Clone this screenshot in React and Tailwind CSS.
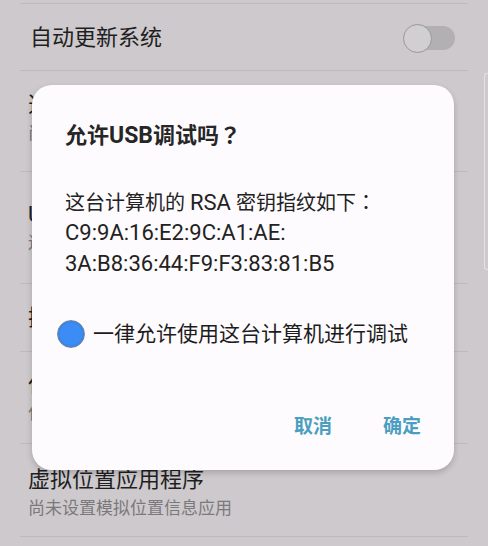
import React from 'react';

const font = { fontFamily: 'Roboto, "Noto Sans CJK SC", sans-serif' };

// centered full-width punctuation, as on the device
const P = ({ children }) => <span style={{ fontFamily: '"Noto Sans CJK TC", sans-serif' }}>{children}</span>;

// Settings row behind the dim layer
const Row = ({ title, sub, height, children }) => (
    <div className={`flex items-center border-t border-[#bdbabd] pl-[8px] pr-[13px] ${height}`}>
        <div className="flex-1 min-w-0">
            <div className="text-[22px] leading-[30px] text-[#1f1f1f]">{title}</div>
            {sub && <div className="text-[17px] leading-[26px] text-[#7b797b]">{sub}</div>}
        </div>
        {children}
    </div>
);

const Toggle = () => (
    <div className="relative w-[52px] h-[30px] flex items-center">
        <div className="absolute right-0 w-[44px] h-[24px] rounded-full bg-[#b3b0b3]" />
        <div className="absolute left-0 w-[29px] h-[29px] rounded-full bg-[#d2cfd2] border border-[#9a979a]" />
    </div>
);

const Dialog = () => (
    <div className="absolute left-[32px] top-[85px] w-[422px] h-[385px] rounded-[20px] bg-[#fdfbfd] shadow-[0_3px_6px_rgba(0,0,0,0.18)] px-[33px] pt-[33px] flex flex-col">
        <div className="h-[30px] text-[22px] leading-[30px] font-bold text-[#262626] whitespace-nowrap">允许<span className="text-[23px]">USB</span>调试吗<P>？</P></div>
        <div className="mt-[38px] text-[20px] leading-[31px] text-[#222]">
            <div className="h-[31px] whitespace-nowrap">这台计算机的 <span className="text-[22px]">RSA</span> 密钥指纹如下<P>：</P></div>
            <div className="h-[31px] text-[22px]">C9:9A:16:E2:9C:A1:AE:</div>
            <div className="h-[31px] text-[22px]">3A:B8:36:44:F9:F3:83:81:B5</div>
        </div>
        <div className="mt-[40px] -ml-[8px] flex items-center gap-[8px] h-[30px]">
            <div className="w-[28px] h-[28px] rounded-full border border-[#7c8796] bg-[radial-gradient(circle,#3b8cf5_55%,#2f7de8_80%,#6a9bd6_100%)]" />
            <div className="text-[21px] leading-[30px] text-[#1c1c1c]">一律允许使用这台计算机进行调试</div>
        </div>
        <div className="mt-[63px] h-[30px] flex justify-end gap-[51px] text-[19px] leading-[30px] font-bold text-[#4c9ec0]">
            <span>取消</span>
            <span>确定</span>
        </div>
    </div>
);

export default function App() {
    return (
        <div className="relative w-[488px] h-[546px] overflow-hidden bg-[#cdc9cc]" style={font}>
            <div className="pt-[3px] px-[20px]">
                <Row title="自动更新系统" height="h-[67px] pt-[2px] pl-[10px]"><Toggle /></Row>
                <Row title="选择调试应用" sub="尚未设置要调试的应用" height="h-[101px] items-start pt-[19px]" />
                <Row title="USB 调试" sub="连接 USB 后启用调试模式" height="h-[112px]" />
                <Row title="撤消 USB 调试授权" height="h-[68px]" />
                <Row title="仅充电模式下允许ADB调试" sub="仅充电模式下启用" height="h-[92px]" />
                <Row title="虚拟位置应用程序" sub="尚未设置模拟位置信息应用" height="h-[93px] pt-[5px]" />
                <div className="border-t border-[#bdbabd]" />
            </div>
            <div className="absolute right-0 top-[73px] w-[4px] h-[197px] rounded-l-[3px] border border-r-0 border-[#e4e1e4]" />
            <Dialog />
        </div>
    );
}
